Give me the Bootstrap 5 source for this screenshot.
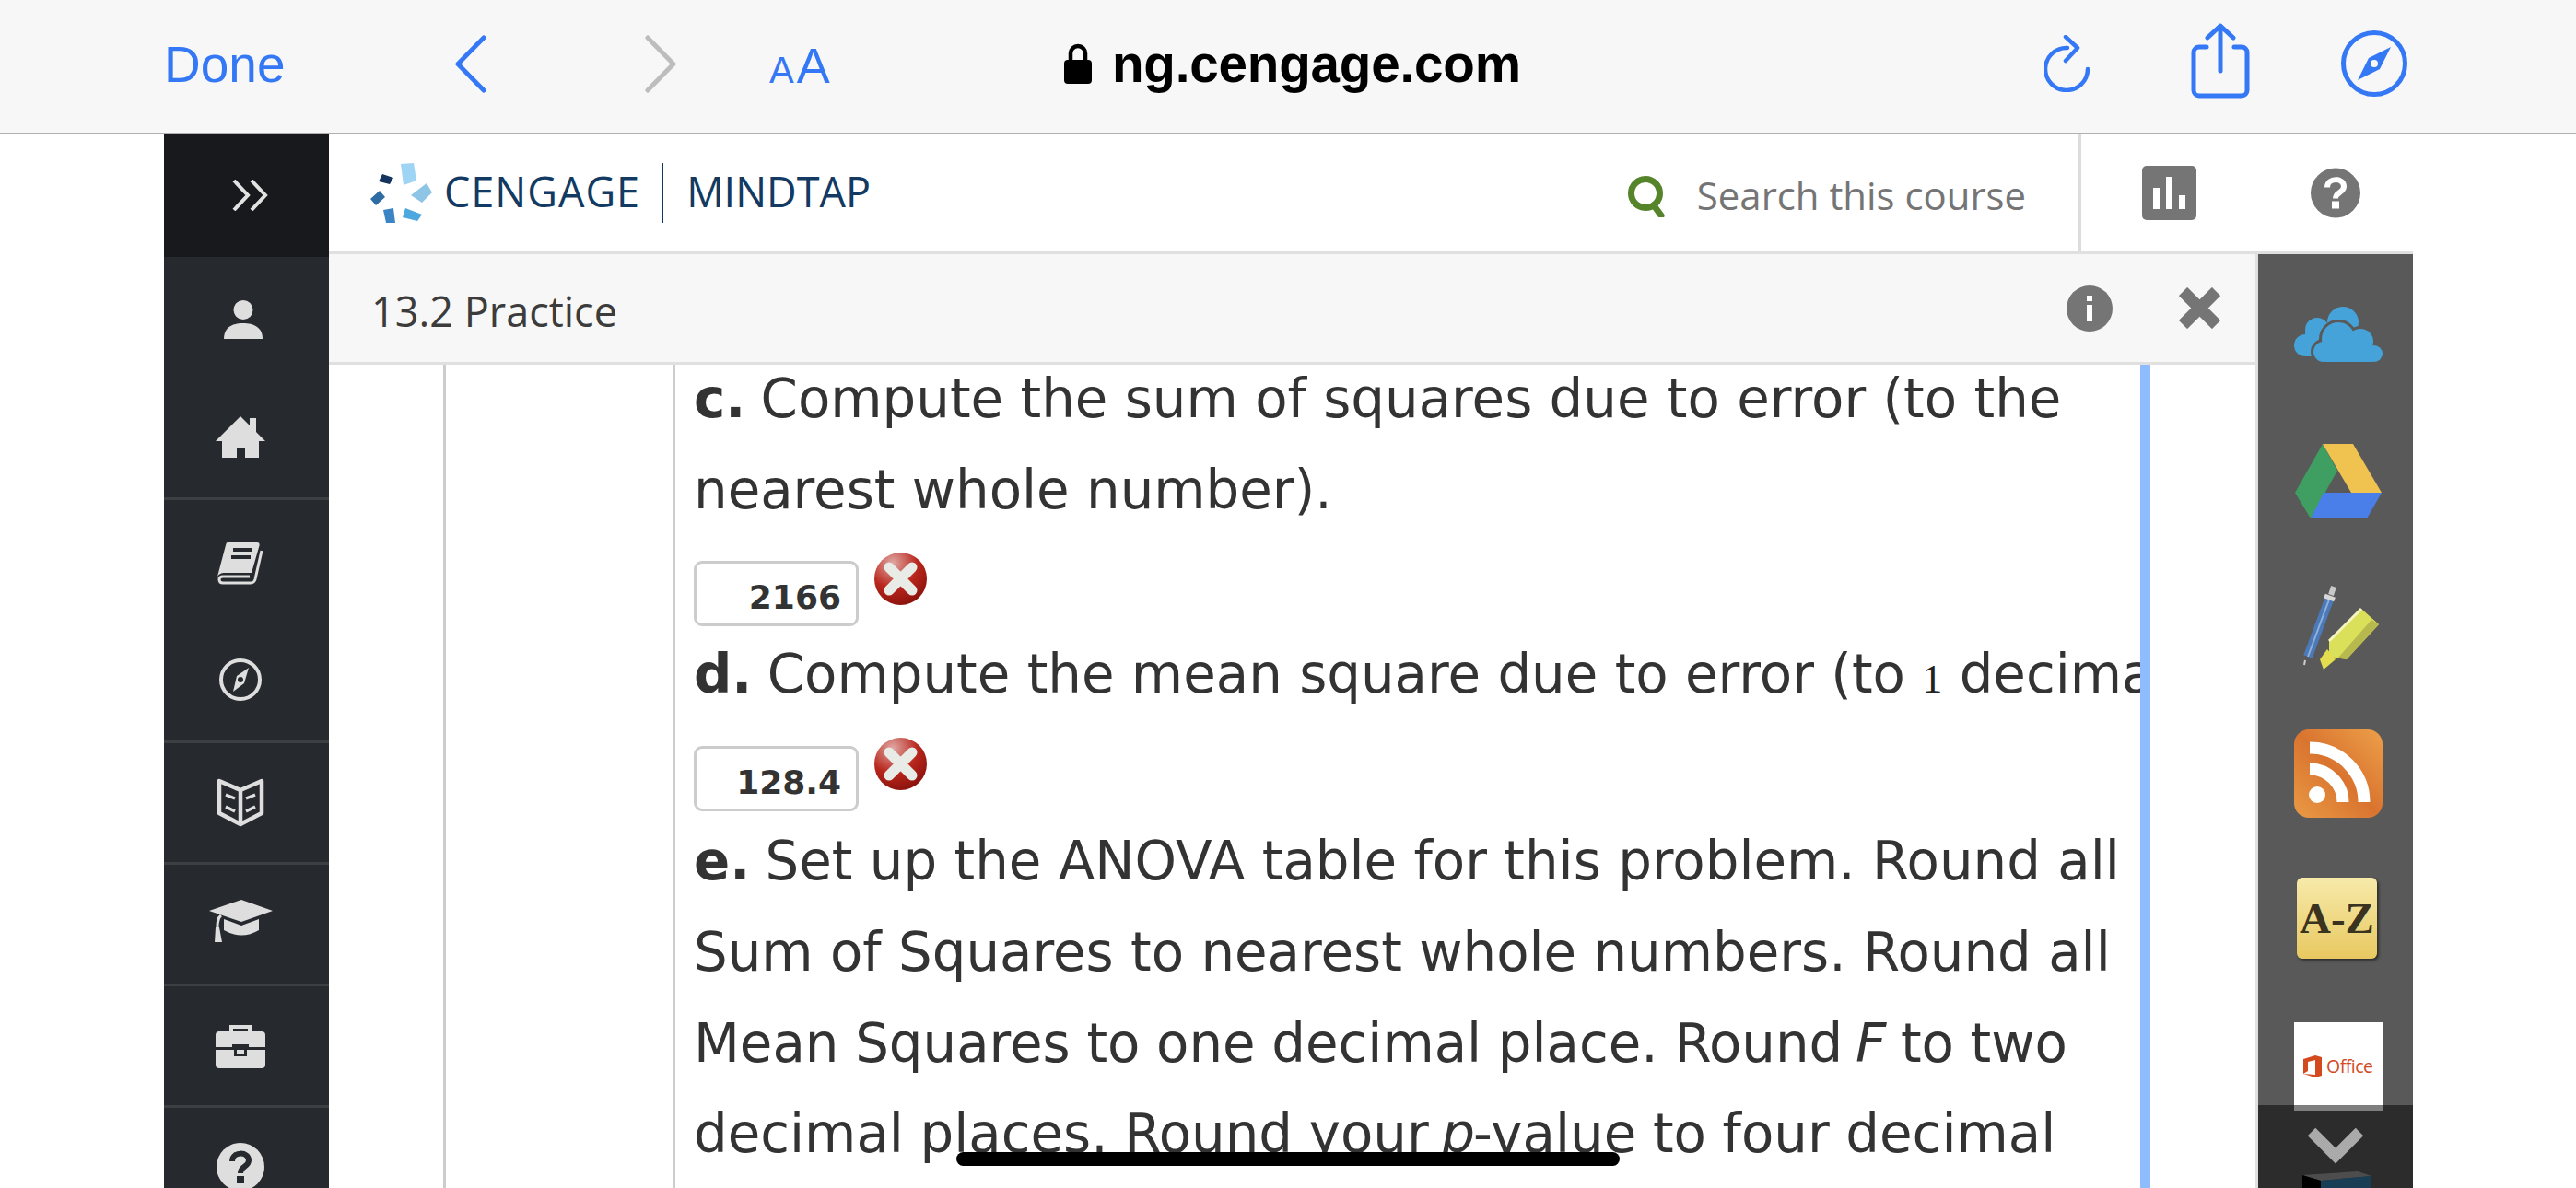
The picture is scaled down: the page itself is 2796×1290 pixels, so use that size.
<!DOCTYPE html>
<html lang="en">
<head>
    <meta charset="UTF-8">
    <title>13.2 Practice</title>
    <link href="https://cdn.jsdelivr.net/npm/bootstrap@5.3.0/dist/css/bootstrap.min.css" rel="stylesheet">
    <style>
        html, body { height: 1290px; overflow: hidden; background: #fff; }
        svg { display: block; flex: none; }

        /* safari bar */
        .safari-bar { height: 145px; background: #f7f7f7; border-bottom: 1px solid #b0b0b0; padding-left: 178px; padding-bottom: 6px; font-family: "Liberation Sans", Arial, sans-serif; }
        .safari-done { font-size: 55px; color: #3478f6; width: 315px; line-height: 1; margin-top: 2px; }
        .safari-next { margin-left: 122px; }
        .safari-aa { color: #3478f6; width: 320px; margin-left: 100px; line-height: 1; margin-top: 4px; }
        .safari-aa .aa-s { font-size: 40px; }
        .safari-aa .aa-b { font-size: 54px; margin-left: 3px; }
        .safari-url { font-size: 56.6px; font-weight: 700; color: #000; line-height: 1; margin-left: 22px; margin-top: 2px; width: 1012px; letter-spacing: -.2px; }
        .safari-share { margin-left: 109px; margin-bottom: 6px; }
        .safari-compass { margin-left: 98px; }

        .app-row { height: 1145px; padding-left: 178px; padding-right: 177px; }
        .app-main { min-width: 0; }

        /* left dark sidebar */
        .side-bar { width: 179px; background: #26292d; flex: none; overflow: hidden; }
        .side-top { height: 134px; background: #18191c; padding-left: 74px; flex: none; }
        .side-item { height: 132px; padding-right: 13px; color: #dedede; flex: none; }
        .side-line { border-bottom: 3px solid #3d3f42; }
        .side-person { height: 129px; padding-right: 7px; padding-top: 6px; }
        .side-home { height: 135px; }
        .side-book { padding-top: 6px; }

        /* course header */
        .course-head { height: 131px; border-bottom: 3px solid #e0e0e0; font-family: "Open Sans", sans-serif; flex: none; padding-left: 45px; }
        .brand-word { font-size: 45px; color: #123a62; line-height: 1; margin-top: -4px; }
        .brand-wide { letter-spacing: 1px; margin-left: -3px; }
        .brand-div { width: 2px; height: 65px; background: #123a62; margin: 0 25px 0 23px; }
        .search-glass { margin-left: auto; }
        .search-hint { font-size: 41.9px; color: #757575; line-height: 1; margin-left: 31px; margin-top: 6px; }
        .head-div { width: 3px; height: 128px; background: #dcdcdc; margin-left: 57px; margin-right: 66px; align-self: flex-start; }
        .head-help { margin-left: 124px; margin-right: 57px; }

        /* activity */
        .work-row { min-height: 0; }
        .title-strip { height: 120px; background: #f7f7f7; border-bottom: 3px solid #e0e0e0; font-family: "Open Sans", sans-serif; padding-left: 46px; flex: none; }
        .title-strip .strip-text { font-size: 45px; color: #3c3c3c; line-height: 1; margin-top: 6px; }
        .strip-info { margin-left: auto; }
        .strip-close { margin-left: 72px; margin-right: 38px; }
        .activity { border-right: 3px solid #e0e0e0; min-width: 0; }
        .reader { flex: 1; min-height: 0; overflow: hidden; padding-left: 124px; }
        .reader-gutter { width: 252px; border-left: 3px solid #ccc; border-right: 3px solid #ccc; flex: none; }
        .reader-text { width: 1590px; flex: none; overflow: hidden; padding-left: 20px; white-space: nowrap; font-family: "DejaVu Sans", Verdana, sans-serif; font-size: 57.8px; line-height: 98.7px; color: #333; margin-top: -12px; }
        .reader-text b { margin-right: -2px; }
        .reader-text i { margin-left: -4px; margin-right: -2px; }
        .tight-words { word-spacing: -.7px; }
        .reader-edge { width: 11px; background: #8fbcff; flex: none; }
        .qa-num { font-family: "Liberation Serif", serif; font-size: 44px; line-height: 0; color: #222; }
        .answer-row { height: 102px; padding-top: 28px; }
        .answer-tall { height: 104px; }
        .answer-box { width: 179px; height: 71px; border: 3px solid #ccc; border-radius: 9px; padding: 8px 16px 0 0; text-align: right; font-weight: 700; font-size: 36px; line-height: 1.2; color: #333; font-family: "DejaVu Sans", Verdana, sans-serif; background: #fff; outline: 0; }
        .answer-mark { margin-left: 17px; margin-top: -9px; }

        /* tool rail */
        .tool-rail { width: 168px; background: #595959; padding-top: 39px; padding-left: 39px; overflow: hidden; position: relative; flex: none; }
        .tool-slot { width: 96px; height: 96px; margin-bottom: 63px; flex: none; }
        .az-tile { width: 87px; height: 88px; margin: 2px 0 0 3px; border-radius: 6px; background: linear-gradient(#f7eaaa, #e8c860); box-shadow: 2px 2px 3px rgba(0,0,0,.5); font-family: "Liberation Serif", serif; font-weight: 700; font-size: 47px; color: #3a3320; line-height: 88px; text-align: center; }
        .office-tile { background: #fff; color: #d24a1e; font-family: "Open Sans", sans-serif; font-size: 19.5px; letter-spacing: -.5px; padding-left: 10px; gap: 5px; }
        .shelf-book { margin-left: 9px; margin-top: 3px; }
        .rail-more { position: absolute; left: 0; right: 0; bottom: 0; height: 90px; background: rgba(0,0,0,.5); padding-top: 24px; }

        .home-pill { position: absolute; left: 1038px; top: 1251px; width: 720px; height: 15px; border-radius: 8px; background: #000; }
    </style>
</head>
<body class="position-relative">

    <div class="safari-bar d-flex align-items-center">
        <div class="safari-done">Done</div>
        <svg width="36" height="63" viewBox="0 0 36 63" fill="none" stroke="#3478f6" stroke-width="5" stroke-linecap="round" stroke-linejoin="round" class="me-5"><path d="M32 3 4 31.500 32 60"/></svg>
        <svg width="36" height="63" viewBox="0 0 36 63" fill="none" stroke="#bdbdbd" stroke-width="5" stroke-linecap="round" stroke-linejoin="round" class="safari-next"><path d="M4 3 32 31.500 4 60"/></svg>
        <div class="safari-aa"><span class="aa-s">A</span><span class="aa-b">A</span></div>
        <svg width="30" height="44" viewBox="0 0 30 44"><path d="M7 20V11a8 8 0 0 1 16 0v9" fill="none" stroke="#000" stroke-width="4.500"/><rect y="18" width="30" height="26" rx="4"/></svg>
        <div class="safari-url">ng.cengage.com</div>
        <svg width="50" height="62" viewBox="0 0 50 62" fill="none" stroke="#3478f6" stroke-width="4.500" stroke-linecap="round" stroke-linejoin="round"><path d="M47 37A23 23 0 1 1 25 14"/><path d="M23 2 36 14 23 28"/></svg>
        <svg width="64" height="82" viewBox="0 0 64 82" fill="none" stroke="#3478f6" stroke-width="5" stroke-linecap="round" stroke-linejoin="round" class="safari-share"><path d="M17 26H9a6 6 0 0 0-6 6v41a6 6 0 0 0 6 6h46a6 6 0 0 0 6-6V32a6 6 0 0 0-6-6h-8"/><path d="M32 52V3M18 16 32 3 46 16"/></svg>
        <svg width="74" height="74" viewBox="0 0 74 74" class="safari-compass"><circle cx="37" cy="37" r="33.500" fill="none" stroke="#3478f6" stroke-width="5"/><path d="M55 19 43 43 19 55 31 31Z" fill="#3478f6"/><circle cx="37" cy="37" r="4" fill="#f7f7f7"/></svg>
    </div>

    <div class="app-row d-flex">
        <nav class="side-bar d-flex flex-column">
            <div class="side-top d-flex align-items-center">
                <svg width="40" height="34" viewBox="0 0 40 34" fill="none" stroke="#e2e2e2" stroke-width="4"><path d="M2 1 17 17 2 33M21 1 36 17 21 33"/></svg>
            </div>
            <div class="side-item side-person d-flex align-items-center justify-content-center">
                <svg width="42" height="42" viewBox="0 0 42 42" fill="currentColor"><circle cx="21" cy="10.500" r="10.500"/><path d="M0 42C0 29 10 25 21 25S42 29 42 42Z"/></svg>
            </div>
            <div class="side-item side-home side-line d-flex align-items-center justify-content-center">
                <svg width="54" height="45" viewBox="0 0 54 45" fill="currentColor"><path d="M27 0 37 10V2H44V17L54 27H47V45H32V35H23V45H7V27H0Z"/></svg>
            </div>
            <div class="side-item side-book d-flex align-items-center justify-content-center">
                <svg width="50" height="46" viewBox="0 0 50 46" fill="currentColor"><path d="M11 0H43C45 0 46 1 45.500 3.500L37 33H7C4 33 2 34 0 37L9 3C9.500 1 10 0 11 0Z"/><path d="M48 9 41 40Q40 44 36 44H6Q2 44 2 40 2 37 6 37H35" fill="none" stroke="currentColor" stroke-width="3"/><path d="M17 8H38M15 16H36" stroke="#26292d" stroke-width="4"/></svg>
            </div>
            <div class="side-item side-line d-flex align-items-center justify-content-center">
                <svg width="46" height="46" viewBox="0 0 46 46" fill="currentColor" class="mb-1"><circle cx="23" cy="23" r="21" fill="none" stroke="currentColor" stroke-width="4"/><path d="M32 10 27 27 15 36 19 19Z"/><circle cx="23" cy="23" r="3" fill="#26292d"/></svg>
            </div>
            <div class="side-item side-line d-flex align-items-center justify-content-center">
                <svg width="52" height="53" viewBox="0 0 52 53" fill="none" stroke="currentColor" stroke-width="4.500" stroke-linejoin="round"><path d="M26 13 3 3V38L26 50 49 38V3ZM26 13V50"/><path d="M10 18 20 22M10 31 20 36M42 18 32 22M42 31 32 36" stroke-width="3.500"/></svg>
            </div>
            <div class="side-item side-line d-flex align-items-center justify-content-center">
                <svg width="69" height="46" viewBox="0 0 69 46" fill="currentColor" class="mb-2"><path d="M35 0 69 12 35 24 0 12Z"/><path d="M16 21 35 28 54 21V33Q35 44 16 33Z"/><path d="M13 17C9 20 9 25 9 30" fill="none" stroke="currentColor" stroke-width="3"/><path d="M7 30H11L14 46H6Z"/></svg>
            </div>
            <div class="side-item side-line d-flex align-items-center justify-content-center">
                <svg width="54" height="48" viewBox="0 0 54 48" fill="currentColor"><path d="M4 8H50A4 4 0 0 1 54 12V25H36V22H18V25H0V12A4 4 0 0 1 4 8Z"/><path d="M0 28H20V35H34V28H54V44A4 4 0 0 1 50 48H4A4 4 0 0 1 0 44Z"/><path d="M17 8V3H37V8" fill="none" stroke="currentColor" stroke-width="4"/><path d="M23 28H31V32H23Z"/></svg>
            </div>
            <div class="side-item d-flex align-items-center justify-content-center">
                <svg width="52" height="52" viewBox="0 0 52 52" class="mb-1"><circle cx="26" cy="26" r="26" fill="currentColor"/><path d="M17 20C17 9 35 9 35 19 35 26 26 25 26 33" fill="none" stroke="#26292d" stroke-width="6"/><rect x="22" y="36" width="8" height="8" fill="#26292d"/></svg>
            </div>
        </nav>

        <div class="app-main flex-grow-1 d-flex flex-column">
            <header class="course-head d-flex align-items-center">
                <svg width="67" height="65" viewBox="402 174 67 65" class="me-3"><path d="M435 175 449 174 452 193 438 198Z" fill="#9ed4f4"/><path d="M415 186 427 190 423 197 411 194Z" fill="#15335f"/><path d="M412 204 418 211 408 220 402 213Z" fill="#2e6da4"/><path d="M463 196 469 206 458 217 446 209Z" fill="#8ec4e6"/><path d="M416 225 427 223 429 239 419 239Z" fill="#3b85c5"/><path d="M440 223 458 230 453 237 437 233Z" fill="#4ca8de"/></svg>
                <span class="brand-word brand-wide">CENGAGE</span>
                <span class="brand-div"></span>
                <span class="brand-word">MINDTAP</span>
                <svg width="45" height="45" viewBox="0 0 45 45" fill="none" stroke="#55842a" stroke-width="7" class="search-glass mt-2"><circle cx="20" cy="19" r="15.500"/><path d="M29 32 37 43" stroke-linecap="round"/></svg>
                <span class="search-hint">Search this course</span>
                <span class="head-div"></span>
                <svg width="59" height="59" viewBox="0 0 59 59"><rect width="59" height="59" rx="5" fill="#757575"/><path d="M12 24H19V47H12ZM26 12H33V47H26ZM40 32H47V47H40Z" fill="#fff"/></svg>
                <svg width="54" height="57" viewBox="0 0 54 54" class="head-help"><circle cx="27" cy="27" r="27" fill="#757575"/><path d="M18 21C18 10 36 10 36 20 36 27 27 26 27 33" fill="none" stroke="#fff" stroke-width="6"/><rect x="23" y="36" width="8" height="8" fill="#fff"/></svg>
            </header>
            <div class="work-row d-flex flex-grow-1">
                <main class="activity flex-grow-1 d-flex flex-column">
                    <div class="title-strip d-flex align-items-center">
                        <span class="strip-text">13.2 Practice</span>
                        <svg width="50" height="50" viewBox="0 0 50 50" class="strip-info"><circle cx="25" cy="25" r="25" fill="#757575"/><path d="M22 21H28V39H22ZM22 11H28V17H22Z" fill="#fff"/></svg>
                        <svg width="45" height="45" viewBox="0 0 45 45" class="strip-close"><path d="M4.500 4.500 40.500 40.500M40.500 4.500 4.500 40.500" stroke="#757575" stroke-width="13"/></svg>
                    </div>
                    <div class="reader d-flex">
                        <div class="reader-gutter"></div>
                        <div class="reader-text">
                            <div><b>c.</b> Compute the sum of squares due to error (to the<br>nearest whole number).</div>
                            <div class="answer-row d-flex align-items-start">
                                <input class="answer-box" type="text" value="2166" readonly>
                                <svg class="answer-mark" width="57" height="57" viewBox="0 0 57 57"><defs><radialGradient id="markFill" cx=".35" cy=".2" r=".95"><stop offset="0" stop-color="#e0a8a4"/><stop offset=".5" stop-color="#b8261c"/><stop offset="1" stop-color="#7c0c08"/></radialGradient></defs><circle cx="28.500" cy="28.500" r="28.500" fill="url(#markFill)"/><path d="M16 16 41 41M41 16 16 41" stroke="#e8ebe6" stroke-width="11" stroke-linecap="round"/></svg>
                            </div>
                            <div><b>d.</b> Compute the mean square due to error (to <span class="qa-num">1</span> decimal place).</div>
                            <div class="answer-row answer-tall d-flex align-items-start">
                                <input class="answer-box" type="text" value="128.4" readonly>
                                <svg class="answer-mark" width="57" height="57" viewBox="0 0 57 57"><circle cx="28.500" cy="28.500" r="28.500" fill="url(#markFill)"/><path d="M16 16 41 41M41 16 16 41" stroke="#e8ebe6" stroke-width="11" stroke-linecap="round"/></svg>
                            </div>
                            <div><b>e.</b> Set up the ANOVA table for this problem. Round all<br>Sum of Squares to nearest whole numbers. Round all<br><span class="tight-words">Mean Squares to one decimal place. Round <i>F</i> to two<br>decimal places. Round your <i>p</i>-value to four decimal</span></div>
                        </div>
                        <div class="reader-edge"></div>
                    </div>
                </main>
                <aside class="tool-rail d-flex flex-column">
                    <div class="tool-slot">
                        <svg width="96" height="96" viewBox="0 0 96 96"><defs><g id="frontCloud"><circle cx="48" cy="53" r="18"/><circle cx="72" cy="56" r="14"/><circle cx="87" cy="69" r="9"/><circle cx="32" cy="67" r="11"/><rect x="32" y="60" width="55" height="18" rx="4"/></g></defs><g fill="#45a3d9"><circle cx="53" cy="35" r="17"/><circle cx="25" cy="43" r="13"/><circle cx="12" cy="60" r="12"/><rect x="12" y="46" width="40" height="26"/></g><use href="#frontCloud" fill="#595959" stroke="#595959" stroke-width="6"/><use href="#frontCloud" fill="#45a3d9"/></svg>
                    </div>
                    <div class="tool-slot">
                        <svg width="96" height="96" viewBox="0 0 96 96"><g transform="translate(0 8)"><path d="M31 0 47 29 18 81 1 53Z" fill="#3f9f62"/><path d="M31 0H64L95 53H62Z" fill="#f0c250"/><path d="M32 53H95L79 81H18Z" fill="#4a7ee8"/></g></svg>
                    </div>
                    <div class="tool-slot">
                        <svg width="96" height="96" viewBox="0 0 96 96"><path d="M15 80 38 18" stroke="#4c79b8" stroke-width="10"/><path d="M15 80 38 18" stroke="#8fb0dc" stroke-width="2"/><path d="M40 13 43 4" stroke="#c8c8c8" stroke-width="6"/><path d="M33 14 44 18" stroke="#d8d8d8" stroke-width="5"/><path d="M12 84 11 89" stroke="#ccc" stroke-width="2"/><path d="M38 63 73 28 92 45 57 83 38 80Z" fill="#dbe05a"/><path d="M92 45 57 83 48 81 84 40Z" fill="#b7b84e"/><path d="M38 63 73 28" stroke="#f5f5c0" stroke-width="3"/><path d="M28 83 36 72 45 83 32 94Z" fill="#e3dd4f"/></svg>
                    </div>
                    <div class="tool-slot">
                        <svg width="96" height="96" viewBox="0 0 96 96"><defs><linearGradient id="rssFill" x1="0" y1="1" x2="1" y2="0"><stop offset="0" stop-color="#ea9a45"/><stop offset=".5" stop-color="#d9742f"/><stop offset="1" stop-color="#eda04a"/></linearGradient></defs><rect width="96" height="96" rx="16" fill="url(#rssFill)"/><circle cx="25" cy="71" r="9" fill="#fff"/><path d="M17 43A36 36 0 0 1 53 79M17 20A59 59 0 0 1 76 79" fill="none" stroke="#fff" stroke-width="13"/></svg>
                    </div>
                    <div class="tool-slot">
                        <div class="az-tile">A-Z</div>
                    </div>
                    <div class="tool-slot office-tile d-flex align-items-center">
                        <svg width="20" height="24" viewBox="0 0 20 24" fill="#d24a1e"><path d="M0 4 13 0 20 2V22L13 24 0 20 13 21V5L5 7V17L0 20Z"/></svg>
                        <span>Office</span>
                    </div>
                    <div class="tool-slot">
                        <svg width="75" height="40" viewBox="0 0 75 40" class="shelf-book"><path d="M0 4 60 0 75 5 20 10Z" fill="#9a9a9a"/><path d="M0 4 20 10V40H0Z" fill="#000"/><path d="M20 10 75 5V40H20Z" fill="#2f7cab"/></svg>
                    </div>
                    <div class="rail-more d-flex justify-content-center">
                        <svg width="60" height="40" viewBox="0 0 60 40" fill="none" stroke="#aaa" stroke-width="12"><path d="M4 5 30 31 56 5"/></svg>
                    </div>
                </aside>
            </div>
        </div>
    </div>

    <div class="home-pill"></div>

</body>
</html>
